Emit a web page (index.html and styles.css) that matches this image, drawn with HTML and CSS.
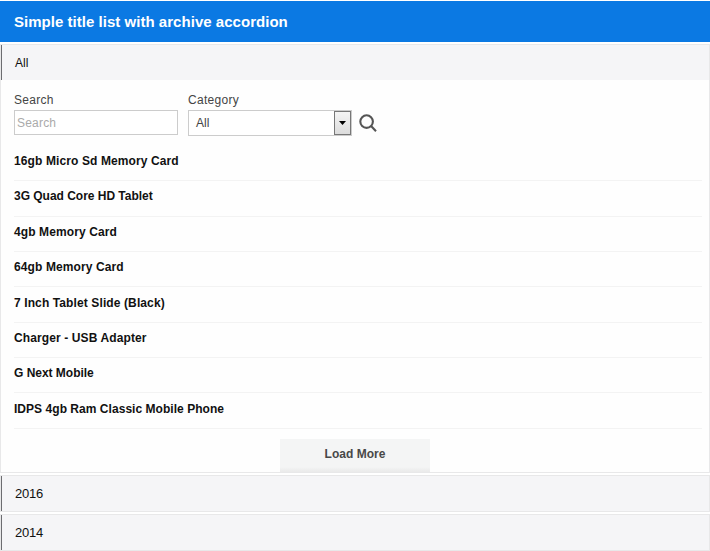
FILE: index.html
```html
<!DOCTYPE html>
<html lang="en">
<head>
<meta charset="utf-8">
<title>Simple title list with archive accordion</title>
<link rel="stylesheet" href="styles.css">
</head>
<body>
<h1 class="title"><span>Simple title list with archive accordion</span></h1>
<div class="tab tab-open"><span>All</span></div>
<section class="panel">
  <form class="filters">
    <label class="field"><span class="label">Search</span><span class="input"><span>Search</span></span></label>
    <div class="field"><span class="label">Category</span>
      <div class="select"><span>All</span><i class="drop"><svg width="7" height="4" viewBox="0 0 7 4"><path d="M0 0H7L3.5 4Z"/></svg></i></div>
    </div>
    <svg class="search" width="20" height="20" viewBox="0 0 20 20"><circle cx="8.6" cy="8.6" r="6.3"/><path d="M13.1 13.1L18 18.2"/></svg>
  </form>
  <ul class="list">
    <li><span>16gb Micro Sd Memory Card</span></li>
    <li class="tight"><span>3G Quad Core HD Tablet</span></li>
    <li><span>4gb Memory Card</span></li>
    <li><span>64gb Memory Card</span></li>
    <li class="low"><span>7 Inch Tablet Slide (Black)</span></li>
    <li><span>Charger - USB Adapter</span></li>
    <li class="tight"><span>G Next Mobile</span></li>
    <li class="low snug"><span>IDPS 4gb Ram Classic Mobile Phone</span></li>
  </ul>
  <div class="more"><span>Load More</span></div>
</section>
<div class="tab year"><span>2016</span></div>
<div class="tab year"><span>2014</span></div>
</body>
</html>
```
FILE: styles.css
```css
* { box-sizing: border-box; }
body {
  margin: 0;
  padding-top: 1px;
  height: 551px;
  overflow: hidden;
  background: #fff;
  font: 12px/16px "Liberation Sans", Arial, sans-serif;
  color: #111;
}
.title {
  margin: 0 0 2px;
  height: 41px;
  padding: 12px 14px 0;
  background: #0b79e3;
  color: #fff;
  font-size: 15px;
  line-height: 18px;
  letter-spacing: 0.03px;
  white-space: nowrap;
}
.tab {
  height: 37px;
  margin-bottom: 2px;
  padding: 10px 14px 0;
  background: #f5f5f7;
  border: 1px solid #e8e8e9;
  box-shadow: inset 1px 0 #6c6c70;
}
.tab-open { height: 36px; margin: 0; border-bottom: 0; }
.year { font-size: 13px; letter-spacing: -0.2px; }
.panel {
  height: 393px;
  margin-bottom: 2px;
  padding: 12px 7px 0 13px;
  background: #fefefe;
  border: 1px solid #e8e8e9;
  border-top: 0;
}
.filters {
  display: flex;
  height: 54.05px;
}
.field { width: 164px; margin-right: 10px; }
.label {
  display: block;
  height: 18px;
  color: #444;
  letter-spacing: 0.3px;
}
.input {
  display: block;
  height: 25px;
  padding: 4px 2px;
  border: 1px solid #ccc;
  background: #fff;
  color: #aaa;
  letter-spacing: 0.2px;
}
.select {
  display: flex;
  justify-content: space-between;
  height: 26px;
  border: 1px solid #ccc;
  background: #fff;
  color: #444;
  line-height: 24px;
  padding-left: 7px;
}
.drop {
  display: flex;
  align-items: center;
  justify-content: center;
  width: 17px;
  border: 1px solid #777;
  background: linear-gradient(#f4f4f4, #dcdcdc);
}
.search {
  margin: 21px 0 0 -4px;
  fill: none;
  stroke: #555;
  stroke-width: 2.1;
}
.list { margin: 0; padding: 0; list-style: none; font-weight: bold; }
.list li {
  height: 35.35px;
  padding-top: 7px;
  border-bottom: 1px solid #f3f3f3;
  letter-spacing: 0.11px;
}
.list .low { padding-top: 8px; }
.list .tight { letter-spacing: -0.02px; }
.list .snug { letter-spacing: 0.04px; }
.more {
  width: 150px;
  height: 33px;
  margin: 10px auto 0 266px;
  padding-top: 7px;
  background: linear-gradient(#f4f5f5 28px, #ebebeb 32px);
  color: #484848;
  text-align: center;
  font-weight: bold;
  letter-spacing: 0.02px;
}
```
